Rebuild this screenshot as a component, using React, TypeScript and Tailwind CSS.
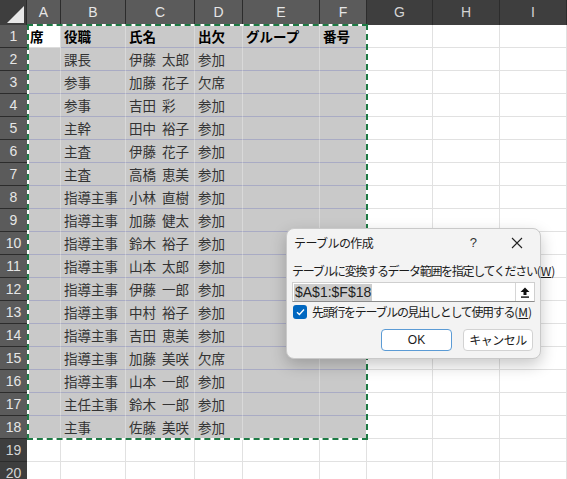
import React from 'react';

const COLS = [
  { l: 'A', w: 'w-[34px]', sel: true },
  { l: 'B', w: 'w-[65px]', sel: true },
  { l: 'C', w: 'w-[69px]', sel: true },
  { l: 'D', w: 'w-[48px]', sel: true },
  { l: 'E', w: 'w-[77px]', sel: true },
  { l: 'F', w: 'w-[47px]', sel: true },
  { l: 'G', w: 'w-[66px]', sel: false },
  { l: 'H', w: 'w-[67px]', sel: false },
  { l: 'I', w: 'w-[67px]', sel: false },
];

const ROWS: string[][] = [
  ['席', '役職', '氏名', '出欠', 'グループ', '番号'],
  ['', '課長', '伊藤 太郎', '参加'],
  ['', '参事', '加藤 花子', '欠席'],
  ['', '参事', '吉田 彩', '参加'],
  ['', '主幹', '田中 裕子', '参加'],
  ['', '主査', '伊藤 花子', '参加'],
  ['', '主査', '高橋 恵美', '参加'],
  ['', '指導主事', '小林 直樹', '参加'],
  ['', '指導主事', '加藤 健太', '参加'],
  ['', '指導主事', '鈴木 裕子', '参加'],
  ['', '指導主事', '山本 太郎', '参加'],
  ['', '指導主事', '伊藤 一郎', '参加'],
  ['', '指導主事', '中村 裕子', '参加'],
  ['', '指導主事', '吉田 恵美', '参加'],
  ['', '指導主事', '加藤 美咲', '欠席'],
  ['', '指導主事', '山本 一郎', '参加'],
  ['', '主任主事', '鈴木 一郎', '参加'],
  ['', '主事', '佐藤 美咲', '参加'],
  [],
  [],
];

const jp = "font-['Noto_Sans_CJK_JP','Noto_Sans',sans-serif]";

function CreateTableDialog() {
  return (
    <div
      className={`absolute left-[286px] top-[228px] w-[255px] h-[131px] bg-[#f3f3f3] border border-[#c9c9c9] rounded-[8px] shadow-[0_6px_16px_rgba(0,0,0,0.22)] px-[5px] text-[#1b1b1b] ${jp}`}
    >
      <div className="h-[28px] flex items-center pl-[2px] text-[12px]">
        <span className="tracking-[-0.6px]">テーブルの作成</span>
        <span className="ml-auto mr-[34px] text-[13px] font-['Liberation_Sans',sans-serif] text-[#333]">?</span>
        <svg width="12" height="12" viewBox="0 0 12 12" className="mr-[12px]">
          <path d="M1 1L11 11M11 1L1 11" stroke="#222" strokeWidth="1.1" />
        </svg>
      </div>
      <div className="mt-[6px] h-[16px] leading-[16px] text-[12px] whitespace-nowrap">
        <span className="tracking-[-1.3px]">テーブルに変換するデータ範囲を指定してください</span>
        <span>
          (<span className="underline">W</span>)
        </span>
      </div>
      <div className="mt-[3px] h-[20px] flex bg-white border border-[#cfcfcf] border-b-[#8c8c8c]">
        <div className="flex-1 flex items-center pl-[1px]">
          <span className="bg-[#cccccc] px-[1px] text-[14px] leading-[17px] text-[#222] font-['Liberation_Sans',sans-serif]">
            $A$1:$F$18
          </span>
        </div>
        <div className="w-[19px] flex items-center justify-center border-l border-[#d6d6d6]">
          <svg width="10" height="11" viewBox="0 0 10 11">
            <path d="M5 0.5L9.5 5H6.5V8H3.5V5H0.5Z" fill="#111" />
            <rect x="1" y="9.4" width="8" height="1.4" fill="#111" />
          </svg>
        </div>
      </div>
      <div className="mt-[2px] h-[16px] flex items-center text-[12px] whitespace-nowrap">
        <div className="ml-[1px] w-[14px] h-[14px] rounded-[3px] bg-[#0067c0] flex items-center justify-center">
          <svg width="9" height="8" viewBox="0 0 9 8">
            <path d="M1 4.2L3.4 6.5L8 1.5" stroke="white" strokeWidth="1.3" fill="none" />
          </svg>
        </div>
        <span className="ml-[5px] tracking-[-1.3px]">先頭行をテーブルの見出しとして使用する</span>
        <span>
          (<span className="underline">M</span>)
        </span>
      </div>
      <div className="mt-[9px] flex justify-end gap-[11px] pr-[2px] text-[12px]">
        <button className="w-[71px] h-[22px] bg-white border border-[#5b9bd5] rounded-[4px] font-['Liberation_Sans',sans-serif] text-[12px] text-[#1b1b1b]">
          OK
        </button>
        <button className="w-[70px] h-[22px] bg-white border border-[#d2d2d2] rounded-[4px] tracking-[-0.5px]">
          キャンセル
        </button>
      </div>
    </div>
  );
}

export default function App() {
  return (
    <div className="relative w-[567px] h-[479px] overflow-hidden bg-white">
      {/* column headers */}
      <div className="flex h-[25px] bg-[#3e3e3e] text-[14px] font-['Liberation_Sans',sans-serif]">
        <div className="w-[27px] h-[25px] flex items-end justify-end pr-[2px] pb-[2px] border-r border-[#2c2c2c]">
          <svg width="17" height="17" viewBox="0 0 17 17">
            <path d="M17 0V17H0Z" fill="#e8e8e8" />
          </svg>
        </div>
        {COLS.map((c) => (
          <div
            key={c.l}
            className={`${c.w} h-[25px] flex items-center justify-center border-r border-[#2c2c2c] ${
              c.sel ? 'bg-[#5b5b5b] text-[#e6e6e6]' : 'text-[#d4d4d4]'
            }`}
          >
            {c.l}
          </div>
        ))}
      </div>

      {/* rows */}
      {ROWS.map((r, i) => {
        const selRow = i < 18;
        return (
          <div key={i} className="flex h-[23px]">
            <div
              className={`w-[27px] h-[23px] flex items-center justify-center border-b border-[#2c2c2c] text-[14px] font-['Liberation_Sans',sans-serif] ${
                selRow ? 'bg-[#5b5b5b] text-[#e6e6e6]' : 'bg-[#3e3e3e] text-[#d4d4d4]'
              }`}
            >
              {i + 1}
            </div>
            {COLS.map((c, j) => {
              const sel = selRow && c.sel;
              const active = i === 0 && j === 0;
              const text = r[j] ?? '';
              return (
                <div
                  key={c.l}
                  className={`${c.w} h-[23px] flex items-center pl-[3px] whitespace-pre overflow-hidden text-[13.5px] ${jp} ${
                    i === 0 ? 'font-bold text-black' : 'text-[#333]'
                  } ${
                    active
                      ? 'bg-white border-b border-r border-[#dcdcdc]'
                      : sel
                      ? 'bg-[#c9c9c9] border-b border-r border-b-[#a9abc4] border-r-[#d9d9d9]'
                      : 'bg-white border-b border-r border-[#e1e1e1]'
                  }`}
                >
                  {text.replace(' ', '  ')}
                </div>
              );
            })}
          </div>
        );
      })}

      {/* copy marquee around A1:F18 */}
      <div className="absolute left-[27px] top-[24px] w-[341px] h-[416px] border-2 border-white pointer-events-none" />
      <div className="absolute left-[27px] top-[24px] w-[341px] h-[416px] border-2 border-dashed border-[#1e7a45] pointer-events-none" />

      <CreateTableDialog />
    </div>
  );
}
